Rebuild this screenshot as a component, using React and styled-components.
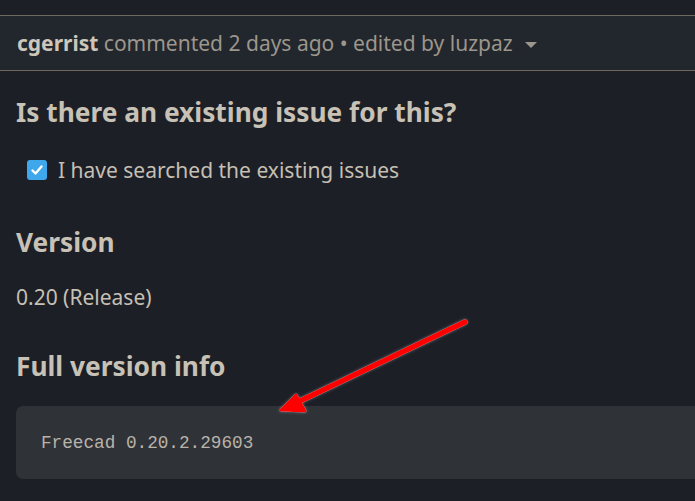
import React from "react";
import styled, { createGlobalStyle } from "styled-components";

const Global = createGlobalStyle`
  html, body { margin: 0; padding: 0; background: #1c1f26; }
  body { font-family: "Noto Sans", "Open Sans", sans-serif; color: #c6bfb4; overflow: hidden; }
`;

const Page = styled.div`
  position: relative;
  width: 695px;
  height: 501px;
  overflow: hidden;
  background: #1c1f26;
  padding-top: 15px;
  box-sizing: border-box;
`;

const Header = styled.div`
  display: flex;
  align-items: center;
  height: 54px;
  padding: 0 17px;
  background: #22262d;
  border-top: 1px solid #6f685e;
  border-bottom: 1px solid #6f685e;
  font-size: 21px;
  color: #9c968c;
  white-space: nowrap;
`;

const Author = styled.span`
  font-weight: 700;
  color: #cdc6bb;
`;

const Caret = styled.span`
  display: inline-block;
  width: 0;
  height: 0;
  margin-left: 12px;
  margin-top: 4px;
  border-left: 6px solid transparent;
  border-right: 6px solid transparent;
  border-top: 6px solid #9c968c;
`;

const Body = styled.div`
  padding: 0 0 0 16px;
`;

const Heading = styled.h3`
  margin: 0;
  font-size: 26.3px;
  font-weight: 700;
  color: #c8c1b6;
  line-height: 32px;
  padding-top: ${(p) => p.$top}px;
`;

const CheckRow = styled.label`
  display: flex;
  align-items: center;
  gap: 11px;
  margin-top: 28px;
  padding-left: 11px;
  font-size: 21px;
  line-height: 28px;
  color: #c6bfb4;
`;

const Box = styled.span`
  width: 20px;
  height: 20px;
  border-radius: 3px;
  background: #3fa7ec;
  display: flex;
  align-items: center;
  justify-content: center;
`;

const Para = styled.p`
  margin: 25px 0 0;
  font-size: 21px;
  line-height: 28px;
  color: #c6bfb4;
`;

const CodeBlock = styled.pre`
  margin: 24px 0 0;
  height: 73px;
  box-sizing: border-box;
  padding: 0 25px;
  display: flex;
  align-items: center;
  background: #2f3237;
  border-radius: 7px 0 0 7px;
  font-family: "Liberation Mono", monospace;
  font-size: 17.7px;
  color: #b9b3aa;
`;

const Arrow = styled.svg`
  position: absolute;
  left: 0;
  top: 0;
  pointer-events: none;
`;

export default function App() {
  return (
    <>
      <Global />
      <Page>
        <Header>
          <span>
            <Author>cgerrist</Author> commented 2 days ago • edited by luzpaz
          </span>
          <Caret />
        </Header>
        <Body>
          <Heading $top={25}>Is there an existing issue for this?</Heading>
          <CheckRow>
            <Box>
              <svg width="14" height="14" viewBox="0 0 14 14">
                <path d="M2.5 7.5 L5.5 10.5 L11.5 3.5" fill="none" stroke="#fff" strokeWidth="2.4" strokeLinecap="round" strokeLinejoin="round" />
              </svg>
            </Box>
            I have searched the existing issues
          </CheckRow>
          <Heading $top={42}>Version</Heading>
          <Para>0.20 (Release)</Para>
          <Heading $top={39}>Full version info</Heading>
          <CodeBlock>Freecad 0.20.2.29603</CodeBlock>
        </Body>
        <Arrow width="695" height="501" viewBox="0 0 695 501">
          <defs>
            <filter id="glow" x="-20%" y="-20%" width="140%" height="140%">
              <feDropShadow dx="0" dy="0" stdDeviation="1.5" floodColor="#ffffff" floodOpacity="0.35" />
            </filter>
          </defs>
          <g filter="url(#glow)">
            <line x1="465" y1="322" x2="298" y2="402" stroke="#ff0000" strokeWidth="5.5" strokeLinecap="round" />
            <path d="M281 410 L296 395 L305 411 Z" fill="#ff0000" stroke="#ff0000" strokeWidth="3" strokeLinejoin="round" />
          </g>
        </Arrow>
      </Page>
    </>
  );
}
